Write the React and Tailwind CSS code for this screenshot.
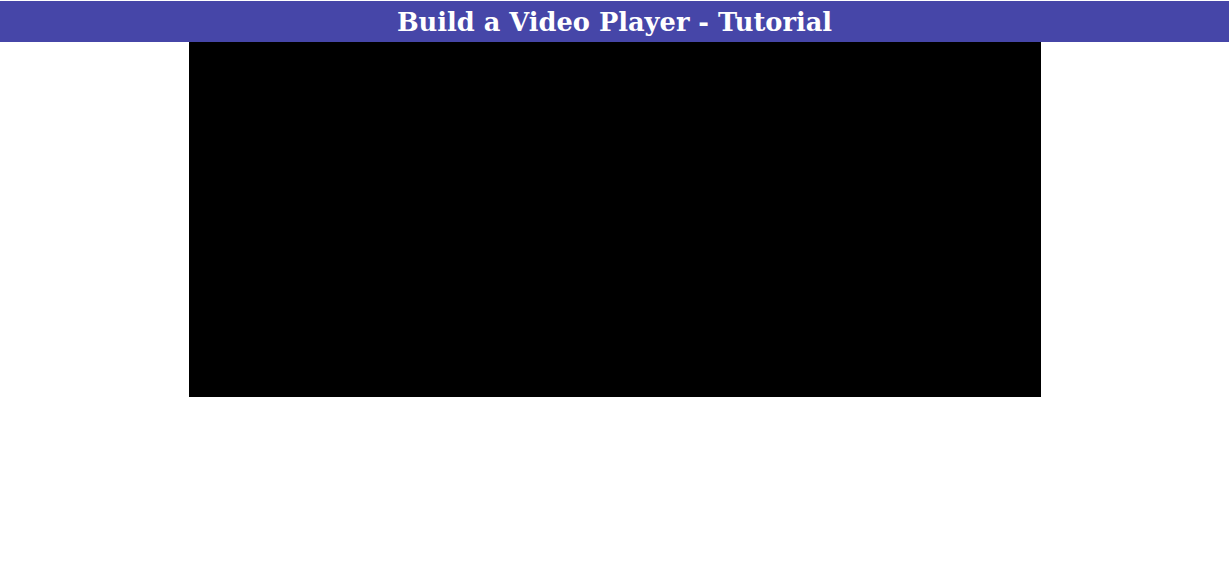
export default function App() {
  return (
    <div className="min-h-[587px] bg-white pt-px">
      {/* header */}
      <header className="h-[41px] bg-[#4646a8] flex items-center justify-center pt-[3px]">
        <h1
          className="text-white font-bold text-[25.7px] leading-none"
          style={{ fontFamily: '"DejaVu Serif", "Liberation Serif", serif' }}
        >
          Build a Video Player - Tutorial
        </h1>
      </header>

      {/* player */}
      <div className="flex justify-center">
        <div className="w-[852px] h-[355px] bg-black"></div>
      </div>
    </div>
  );
}
